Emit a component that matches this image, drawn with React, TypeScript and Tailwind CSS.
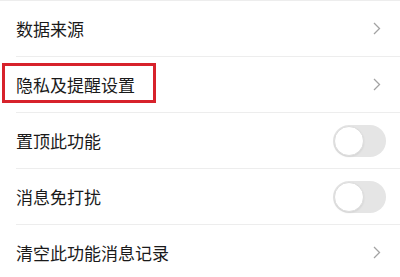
import { ReactNode } from 'react'

type Row = { label: string; kind: 'link' | 'toggle'; highlight?: boolean }

const rows: Row[] = [
  { label: '数据来源', kind: 'link' },
  { label: '隐私及提醒设置', kind: 'link', highlight: true },
  { label: '置顶此功能', kind: 'toggle' },
  { label: '消息免打扰', kind: 'toggle' },
  { label: '清空此功能消息记录', kind: 'link' },
]

function Chevron() {
  return (
    <svg width="8" height="13" viewBox="0 0 8 13" fill="none">
      <path d="M1 1l5.5 5.5L1 12" stroke="#a3a3a3" strokeWidth="1.3" />
    </svg>
  )
}

function Toggle() {
  return (
    <div className="w-[53px] h-[32px] rounded-full bg-[#e5e5e5] p-[1px] flex items-center">
      <div className="w-[30px] h-[30px] rounded-full bg-white border border-[#dcdcdc] shadow-[0_1px_2px_rgba(0,0,0,0.08)]" />
    </div>
  )
}

function Item({ row, last }: { row: Row; last: boolean }) {
  let right: ReactNode = row.kind === 'toggle' ? <Toggle /> : <Chevron />
  return (
    <div className="relative">
      <div className="h-[55px] flex items-center justify-between pl-4 pr-[14px]">
        <span className="text-[17px] text-[#1a1a1a]">{row.label}</span>
        <div className={row.kind === 'toggle' ? 'mr-0' : 'mr-[5px]'}>{right}</div>
      </div>
      {!last && <div className="ml-4 h-px bg-[#ededed]" />}
      {row.highlight && (
        <div className="absolute left-[2px] top-[6px] w-[154px] h-[40px] border-[3px] border-[#d7222b]" />
      )}
    </div>
  )
}

export default function App() {
  return (
    <div
      className="w-[400px] h-[277px] overflow-hidden bg-white"
      style={{ fontFamily: '"Noto Sans CJK SC", "Noto Sans", sans-serif' }}
    >
      <div className="h-px bg-[#ededed]" />
      {rows.map((r, i) => (
        <Item key={r.label} row={r} last={i === rows.length - 1} />
      ))}
    </div>
  )
}
